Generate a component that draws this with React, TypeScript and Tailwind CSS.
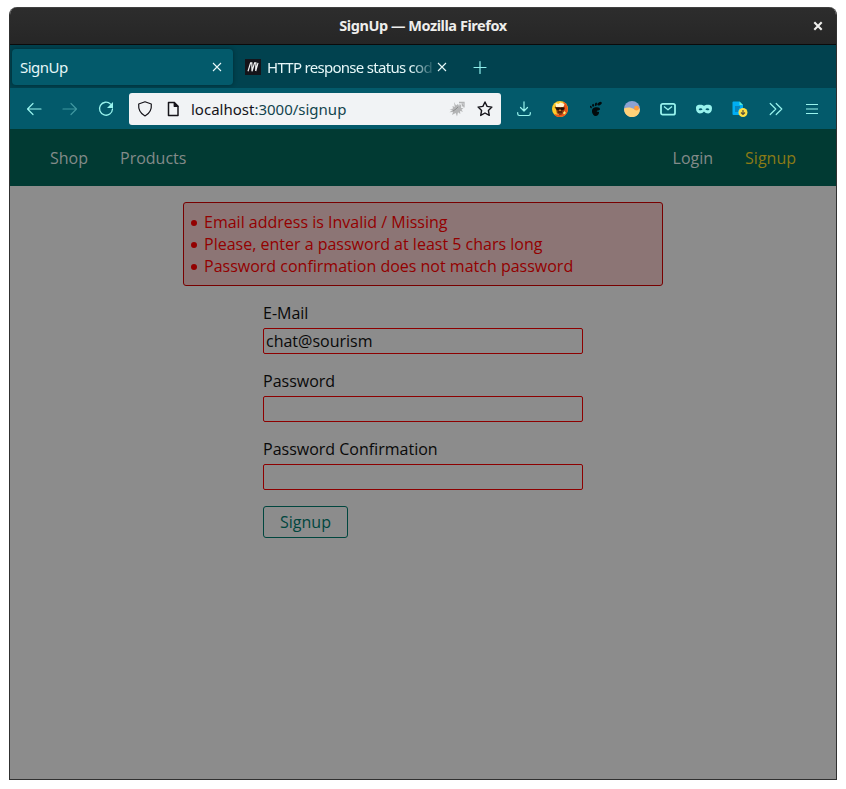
import type { ReactNode } from 'react';

function Icon({ size = 16, className = '', children }: { size?: number; className?: string; children: ReactNode }) {
  return (
    <svg width={size} height={size} viewBox="0 0 16 16" fill="none" stroke="currentColor" strokeWidth="1.2" strokeLinecap="round" strokeLinejoin="round" className={`shrink-0 ${className}`}>
      {children}
    </svg>
  );
}

function TitleBar() {
  return (
    <header className="relative flex h-[38px] shrink-0 items-center justify-center border-t border-b border-t-[#404040] border-b-[#0b0b0b] bg-linear-to-b from-[#2d2d2d] to-[#262626] text-[#eeeeec]">
      <h1 className="font-['Noto_Sans',sans-serif] text-[14.5px] font-bold tracking-[-0.45px] whitespace-nowrap">SignUp — Mozilla Firefox</h1>
      <svg width="10" height="10" viewBox="0 0 10 10" className="absolute top-[13px] right-[13px]" stroke="currentColor" strokeWidth="2.1">
        <path d="M1.3 1.3 8.7 8.7M8.7 1.3 1.3 8.7" />
      </svg>
    </header>
  );
}

function CloseTab() {
  return (
    <svg width="10" height="10" viewBox="0 0 10 10" stroke="currentColor" strokeWidth="1.1" className="shrink-0">
      <path d="M1 1 9 9M9 1 1 9" />
    </svg>
  );
}

function TabStrip() {
  return (
    <div className="flex h-[43px] shrink-0 items-center bg-[#01424f] pl-[2px] font-['Noto_Sans',sans-serif] text-[15px] text-[#e6f7f8]">
      <div className="flex h-9 w-[221px] items-center justify-between rounded-[4px] bg-[#035a6b] pr-[11px] pl-2 shadow-[0_0_4px_rgba(0,0,0,0.35)]">
        <span className="pt-[2px] tracking-[-0.5px]">SignUp</span>
        <CloseTab />
      </div>
      <div className="ml-3 flex h-9 w-[203px] items-center">
        <svg width="16" height="16" viewBox="0 0 16 16" className="shrink-0">
          <path fill="#15141a" d="M0 0h16v16H0z" />
          <path d="M3 12.200 5.600 3.800h1.200l.2 8.400 2.600-8.400h1.300l-.2 8.200M10.700 12l2.300-8.200" fill="none" stroke="#f4f4f5" strokeWidth="1.200" />
        </svg>
        <span className="ml-[6px] w-[170px] mask-r-from-[144px] mask-r-to-[169px] pt-[2px] tracking-[-0.710px] whitespace-nowrap">HTTP response status cod</span>
        <CloseTab />
      </div>
      <Icon className="ml-[24px] text-[#8ff0ec]"><path d="M2 8.500h12M8 2.500v12" /></Icon>
    </div>
  );
}

function AddressBar() {
  return (
    <div className="ml-[15px] flex h-8 w-[372px] items-center rounded-[3px] bg-[#f1f3f5] pr-2 pl-2 text-[#15141a]">
      <Icon><path d="M8 .8 14.3 3c.5 5-1.2 9.2-6.3 12C2.900 12.200 1.200 8 1.700 3z" /></Icon>
      <Icon className="ml-3"><path strokeWidth="1.5" d="M3.500 1.500h5.700l3.800 3.800v9.200H3.500z" /><path fill="currentColor" d="M9.200 1.500v3.800H13z" /></Icon>
      <span className="ml-[10px] pt-[2px] font-['Noto_Sans',sans-serif] text-[15px] whitespace-nowrap">localhost<span className="text-[#12444d]">:3000/signup</span></span>
      <div className="ml-auto flex items-center gap-3">
        <svg width="16" height="16" viewBox="0 0 16 16" className="shrink-0">
          <path fill="#b3b4b5" d="m5 1 2 3.500L9 3l1 2 2-1 .2 3 2.300.2-2 1.500 1.500 2-3-.7.300 3-2.300-1.700L8 15.500 6.700 12 3 14l1-3-3.500.3 3-2.300-3-.6 3.500-.8L3.500 5l2.300 1z" />
          <path d="M10 1.500h5v5M13 2.500l1 3M10.500 3.500l1.500 2" fill="none" stroke="#b3b4b5" strokeWidth="1.300" />
          <path d="m4 10 3-2 2-2" fill="none" stroke="#8d8e8f" strokeWidth="1" />
        </svg>
        <Icon><path strokeWidth="1.400" d="m8 1 2.100 4.400 4.800.7-3.500 3.400.9 4.900L8 12l-4.300 2.400.9-4.900L1.100 6.100l4.800-.7z" /></Icon>
      </div>
    </div>
  );
}

function Extensions() {
  return (
    <div className="ml-[15px] flex items-center gap-5 text-[#98f3ed]">
      <Icon><path d="M8 .8v9M4.500 6.500 8 10l3.500-3.500M1.700 11.500v1.300c0 1 .5 1.700 1.700 1.700h9.200c1.200 0 1.700-.7 1.700-1.700v-1.300" /></Icon>
      <svg width="16" height="16" viewBox="0 0 16 16">
        <circle cx="8" cy="8" r="8" fill="#ffc928" />
        <path fill="#ee5318" d="M11.500.8C15 2.500 17 7.500 15 12c-2 3-5 4-8 4-2-.2-4-1-5-3l5 1 4-3z" />
        <path fill="#8b3c13" d="m3.500 5 2-1h5l2 1.500-.5 4.500-2 3.500-2.500.7L5 13z" />
        <path fill="#fff3cf" d="m3.500 2 3 1 2-1.500 4 1.500-1 3H4z" />
        <path fill="#211008" d="m2.500 6 2 .5h3l1 .5 1-.5h3v1.700l-2 1H9L8 8 7 9.200H5L4 8zM6 10.500h4v1H6z" />
        <path fill="#e48a34" d="m7.500 8.500 1 0 .5 1.500H7zM5 12l2 1.200V14H5z" />
        <path fill="#fff071" d="m12.500 10 1.500 2-2 1.500-1-1.500z" />
      </svg>
      <svg width="16" height="16" viewBox="0 0 16 16" fill="#020a0c">
        <ellipse cx="11.500" cy="2.700" rx="2.500" ry="1.500" transform="rotate(-28 11.500 2.700)" />
        <ellipse cx="7.900" cy="3.300" rx="1" ry="1.800" transform="rotate(15 7.900 3.300)" />
        <ellipse cx="5.100" cy="4.300" rx=".9" ry="1.500" />
        <ellipse cx="2.900" cy="6" rx=".8" ry="1.300" transform="rotate(-25 2.900 6)" />
        <path d="M6.500 6.500c3-.9 5.800-.1 5.500 1.700-.3 1.700-3.200.8-3.300 2 0 .7 1.500.2 2.400 1-.1 2.200-1.600 3.800-3.500 3.800-3.500 0-5.500-7.500-1.100-8.500z" />
      </svg>
      <svg width="16" height="16" viewBox="0 0 16 16">
        <circle cx="8" cy="8" r="8" fill="#8da2d1" />
        <path fill="#ffd178" d="M.1 7.500C3 6.200 7 6 10.500 8.500l5.300-1C16.300 12.500 12.500 16 8 16S-.3 12.200.1 7.500z" />
        <circle cx="12.500" cy="7.200" r="2.400" fill="#ff9c38" />
      </svg>
      <svg width="16" height="16" viewBox="0 0 16 16" fill="none" stroke="currentColor" strokeWidth="1.800" strokeLinejoin="round">
        <rect x="1" y="2.900" width="14" height="10.800" rx="1.700" /><path strokeWidth="1.400" d="m4 5.500 4 3.200 4-3.200" />
      </svg>
      <svg width="16" height="16" viewBox="0 0 16 16">
        <path fill="currentColor" fillRule="evenodd" d="M3.500 3.700C5.500 3.500 7 4.200 8 4.800c1-.6 2.500-1.300 4.500-1.100 2 .2 3.400.6 3.500 3.600 0 3.200-1.700 5.200-3.700 5.200-2 0-3.300-1-4.300-2-1 1-2.300 2-4.300 2S0 10.500 0 7.300c.1-3 1.500-3.400 3.500-3.600zM2.600 8.200C3.700 9.900 5.700 9.600 6.600 8.200 5.700 6.900 3.700 6.700 2.600 8.200zm6.800 0c.9 1.400 2.900 1.700 4 0C12.300 6.700 10.300 6.900 9.400 8.200z" />
      </svg>
      <svg width="16" height="16" viewBox="0 0 16 16">
        <path fill="#00aef4" d="M1.500.5H7.500l3.500 3.500v10H1.500Q.5 14 .5 13v-11.500Q.5.5 1.500.5z" /><path fill="#58e9d4" d="M7.500.5v3.500h3.500z" />
        <path d="M3 6h5M3 8h4M3 10h3" stroke="#0b5e8c" strokeWidth="1" />
        <circle cx="11" cy="11.500" r="4.500" fill="#ffe044" />
        <path d="M11 9v4.500m-2-2 2 2 2-2" fill="none" stroke="#58513d" strokeWidth="1.200" />
      </svg>
      <Icon><path d="m2.200 2.500 5.600 5.500-5.600 5.500m6-11L13.800 8l-5.600 5.500" /></Icon>
      <Icon><path strokeLinecap="butt" d="M2 3.500h12M2 8h12M2 12.500h12" /></Icon>
    </div>
  );
}

function Toolbar() {
  return (
    <div className="flex h-[41px] shrink-0 items-center bg-[#035a6b] pl-4 text-[#98f3ed]">
      <div className="flex gap-5 pt-px">
        <Icon><path d="M15 8H1.500M7 2.500 1.500 8 7 13.500" /></Icon>
        <Icon className="opacity-40"><path d="M1 8h13.500M9 2.500 14.500 8 9 13.500" /></Icon>
        <Icon><path strokeWidth="1.300" d="M12.600 3.100A6.500 6.500 0 1 0 14.500 8" /><path fill="currentColor" stroke="none" d="M15 1v6H9z" /></Icon>
      </div>
      <AddressBar />
      <Extensions />
    </div>
  );
}

function Field({ label, value }: { label: string; value?: string }) {
  return (
    <label className="flex flex-col gap-1">
      <span className="h-[22px] leading-[22px]">{label}</span>
      <input className="h-[26px] w-full rounded-[2px] border border-[#8d0000] bg-transparent px-[2px] outline-none" defaultValue={value} />
    </label>
  );
}

const errors = [
  'Email address is Invalid / Missing',
  'Please, enter a password at least 5 chars long',
  'Password confirmation does not match password',
];

function Page() {
  return (
    <div className="flex flex-1 flex-col bg-[#8c8c8c] font-['Open_Sans',sans-serif] text-[16px] text-[#090909]">
      <nav className="flex h-[57px] shrink-0 items-center justify-between bg-[#013a33] px-10 text-[#838b89]">
        <div className="flex gap-8"><a>Shop</a><a>Products</a></div>
        <div className="flex gap-8"><a>Login</a><a className="text-[#8b7b16]">Signup</a></div>
      </nav>
      <main className="flex flex-col items-center pt-4">
        <ul className="h-[84px] w-[480px] rounded-[3px] border border-[#780000] bg-[#8c7575] py-2 pl-[7px] leading-[22px] text-[#930000]">
          {errors.map((error) => (
            <li key={error} className="flex items-center before:mt-[2px] before:mr-[7px] before:size-[6px] before:rounded-full before:bg-[#930000]">{error}</li>
          ))}
        </ul>
        <form className="mt-4 flex w-[320px] flex-col gap-4">
          <Field label="E-Mail" value="chat@sourism" />
          <Field label="Password" />
          <Field label="Password Confirmation" />
          <button type="button" className="h-8 w-[85px] rounded-[3px] border border-[#00463e] text-[#00463e]">Signup</button>
        </form>
      </main>
    </div>
  );
}

export default function App() {
  return (
    <div className="h-[789px] w-[846px] bg-white pt-[7px] pl-[9px]">
      <div className="flex h-[773px] w-[828px] flex-col overflow-hidden rounded-t-[8px] border border-t-0 border-[#303030]">
        <TitleBar />
        <TabStrip />
        <Toolbar />
        <Page />
      </div>
    </div>
  );
}
